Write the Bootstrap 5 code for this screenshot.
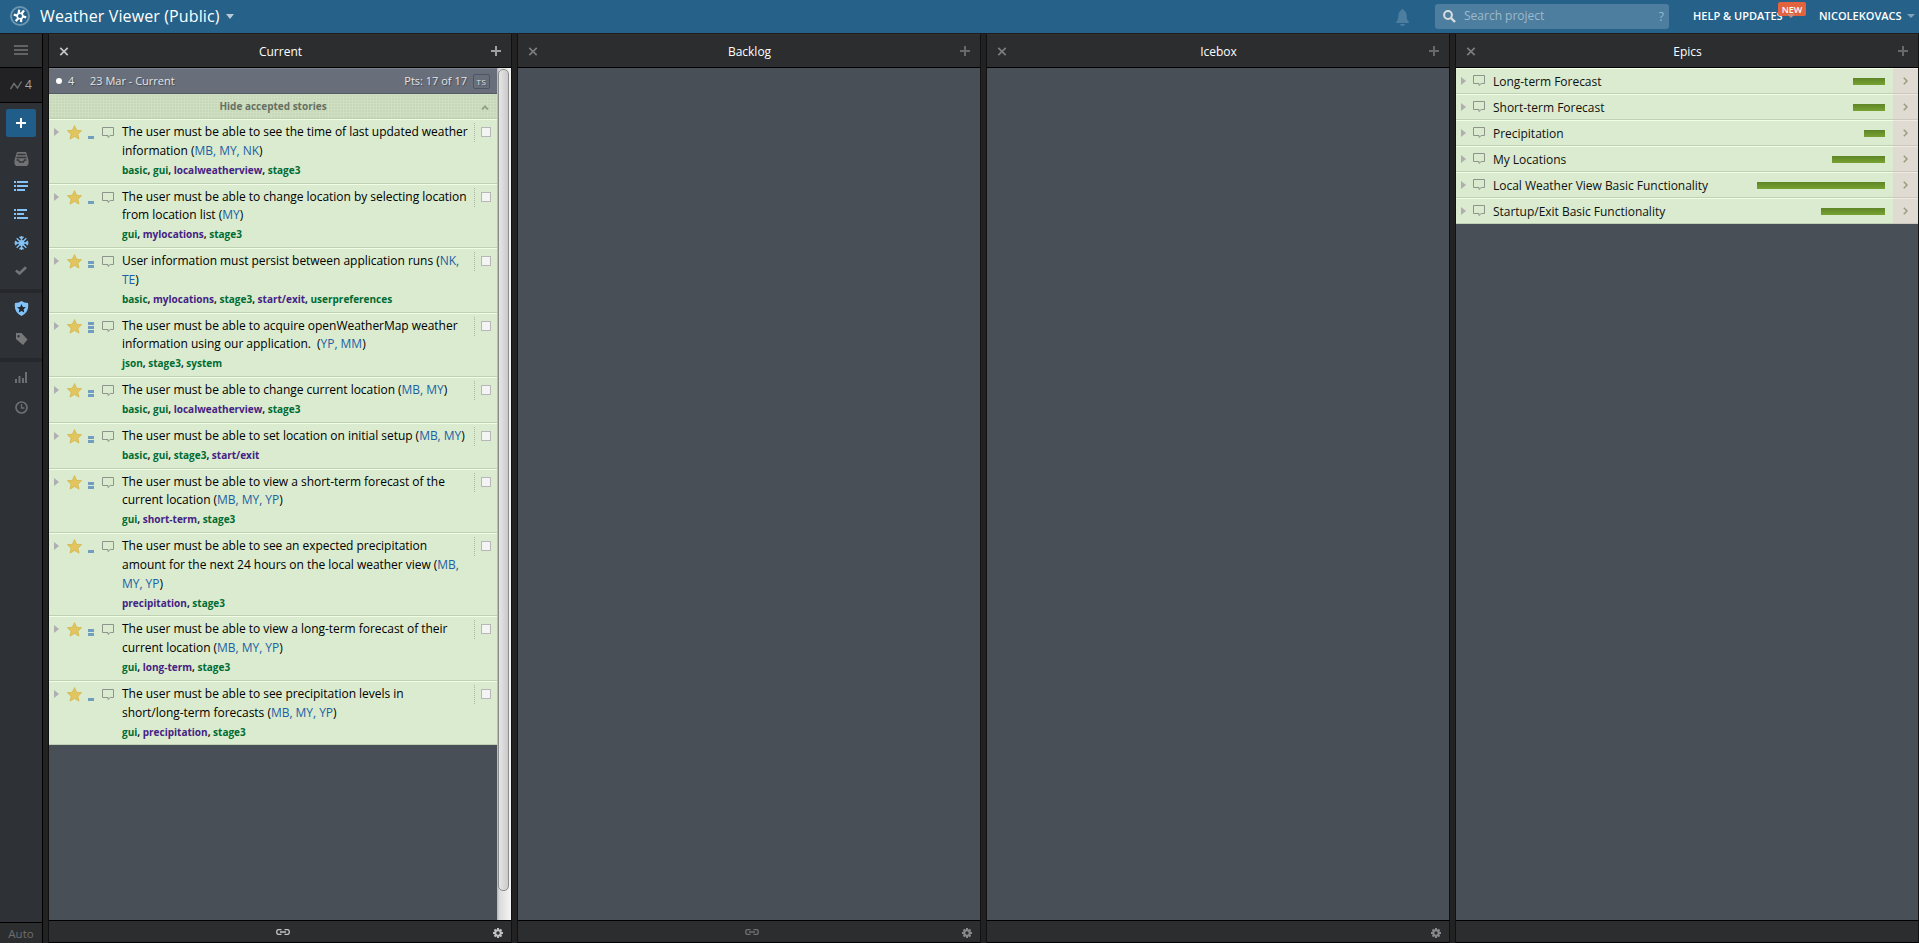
<!DOCTYPE html>
<html lang="en">
<head>
<meta charset="utf-8">
<title>Weather Viewer (Public)</title>
<link href="https://cdn.jsdelivr.net/npm/bootstrap@5.3.0/dist/css/bootstrap.min.css" rel="stylesheet">
<style>
body{font-family:"Open Sans","Noto Sans",sans-serif;font-size:12px;line-height:18.85px;height:943px;overflow:hidden;background:#222;color:#000}
svg{display:block;flex:none}
.topbar{height:33px;background:#256189;color:#fff}
.topbar .project{font-size:16px;letter-spacing:.12px;line-height:32px;margin-left:10px;width:181px;white-space:nowrap}
.searchbox{width:234px;height:25px;background:#4d7e9f;border-radius:3px;color:#9dbacb;font-size:12px}
.toplink{font-size:11px;font-weight:600;line-height:32px}
.newtag{position:absolute;left:85px;top:2px;width:28px;height:14px;background:#e4633f;border-radius:2px;font-size:9px;line-height:15px;font-weight:600;text-align:center}
.newtag::after{content:"";position:absolute;left:9px;top:12px;border:4px solid transparent;border-top-color:#c98a7c;border-bottom:0}
.main-area{height:910px;border-top:1px solid #1b1b1d}
.sidebar{width:43px;background:#2e3237;border-right:1px solid #000;margin-right:6px;color:#6f7173}
.side-top{height:34px;background:#2c2d2f;border-bottom:1px solid #000}
.side-vel{height:35px;background:#222224;border-bottom:1px solid #000;font-size:12px;color:#a5a6a7;gap:3px}
.addbtn{width:30px;height:28px;background:#205d89;border-radius:2px;margin-top:6px}
.side-line{height:4px;width:42px;background:#26282c}
.side-auto{height:21px;background:#2c2d2f;border-top:1px solid #000;font-size:11.5px;line-height:21px;color:#6c6d6e}
.panel{width:462px;margin-right:7px;background:#484f57;box-shadow:-1px 0 #111,1px 0 #111}
.panel-head{height:34px;background:#2c2d2f;border-bottom:1px solid #000;border-top:1px solid #35332f;color:#fff;font-size:12px;padding:0 10px 0 9px}
.panel-head span{padding-top:2px}
.panel-foot{height:23px;background:#2c2d2f;border-top:1px solid #000;border-bottom:1px solid #000;color:#6f7072}
.iter{height:26px;background:#686e7a;border-top:1px solid #7a808b;border-bottom:1px solid #535965;color:#e2e3e5;font-size:11px;text-shadow:1px 1px 1px #0005}
.iter .txt{padding-top:1px}
.tsbox{width:17px;height:15px;border:1px solid #4e5565;border-radius:2px;font-size:8px;letter-spacing:.7px;line-height:13px;text-align:center;margin:1px 7px 0 6px}
.hide-row{height:25px;background-color:#c6d8b7;background-image:linear-gradient(#cfdfc1 1px,transparent 1px),linear-gradient(90deg,#cfdfc1 1px,transparent 1px);background-size:3px 3px;border-bottom:1px solid #bccfaa;color:#667064;font-size:10px;font-weight:700}
.story,.epic{background:#daebcf;border-top:1px solid #f1fde5;border-bottom:1px solid #bfd1b3}
.story{padding:2px 0 3px 5px;white-space:nowrap}
.story i{font-style:normal;color:#1c5fa5}
.story-title{padding-top:1px;letter-spacing:-.03px}
.tags{font-size:10px;font-weight:700;line-height:18.85px;color:#006b33}
.tags b{color:#442284;font-weight:700}
.tags s{text-decoration:none;color:#222}
.est{width:6px;height:13px;margin:4px 8px 0 6px;gap:1px}
.est span{height:3px;background:#719dc1}
.tick{border-left:1px dotted #aab5a2;height:19px;width:23px;padding:4px 0 0 6px;margin-top:1px}
.tick span{display:block;width:10px;height:10px;background:#f4f4f4;border:1px solid #b7b7b7}
.scroller{width:14px;background:linear-gradient(90deg,#bbb 0 1px,#dadada 2px,#f5f5f5)}
.scroller div{width:11px;height:822px;margin:1px 0 0 1px;border:1px solid #8c8c8c;border-radius:5px;background:linear-gradient(90deg,#e6e6e6,#cacaca)}
.epic{height:26px;padding-left:5px;color:#111}
.ename{padding-top:3px;letter-spacing:-.02px}
.bar{height:7px;background:linear-gradient(#5d8427,#78a333);margin-right:8px}
.more{width:25px;height:26px;background:#dfdad2;border-top:1px solid #eee9e2;border-bottom:1px solid #cdc7bc}
</style>
</head>
<body>
<svg width="0" height="0" class="position-absolute"><defs>
<symbol id="tri" viewBox="0 0 5 8"><path d="M0 0L5 4L0 8z" fill="#b0aeb0"/></symbol>
<symbol id="star" viewBox="0 0 15 15"><path d="M7.5.6L9.6 5.3L14.6 5.7L10.9 9.2L12 14.1L7.5 11.5L3 14.1L4.1 9.2L.4 5.7L5.4 5.3z" fill="#e2c55e" stroke="#d3b240" stroke-width=".7"/></symbol>
<symbol id="talk" viewBox="0 0 13 12"><path d="M.5.5h11v8H8.3L6 10.500V8.500H.5z" fill="none" stroke="#8e938b"/></symbol>
<symbol id="plus" viewBox="0 0 10 10"><path d="M5 0v10M0 5h10" stroke="currentColor" stroke-width="2"/></symbol>
<symbol id="cross" viewBox="0 0 8 8"><path d="M.7.7l6.600 6.600M7.300.7L.7 7.300" stroke="currentColor" stroke-width="1.5"/></symbol>
<symbol id="chev" viewBox="0 0 5 8"><path d="M.8.8L4 4L.8 7.200" fill="none" stroke="#9c9a80" stroke-width="1.5"/></symbol>
<symbol id="chain" viewBox="0 0 14 6"><path d="M5.500.7H2.500Q.7.700.7 3T2.500 5.300H5.500M8.500.7h3q1.800 0 1.800 2.300t-1.800 2.300h-3M4 3h6" fill="none" stroke="currentColor" stroke-width="1.3"/></symbol>
<symbol id="gear" viewBox="0 0 10 10"><path d="M5 0v10M0 5h10M1.500 1.500l7 7M8.500 1.500l-7 7" stroke="currentColor" stroke-width="2"/><circle cx="5" cy="5" r="2.700" fill="#2c2d2f" stroke="currentColor" stroke-width="2"/></symbol>
</defs></svg>

<div class="topbar d-flex">
  <svg width="20" height="20" viewBox="0 0 20 20" style="margin:6px 0 0 10px"><circle cx="10" cy="10" r="9" fill="#256189" stroke="#6c95b0" stroke-width="2"/><g stroke="#fff" stroke-width="2.300"><path d="M8.600 7.800L9.200 3.700M11.500 7.700L14 4.400M12.700 10.300L16.200 11.300M11.300 12.400L11 16.200M8.400 12.300L5.700 15.100M7.300 9.700L3.800 8.700"/></g><circle cx="10" cy="10" r="2.800" fill="none" stroke="#fff" stroke-width="1.600"/></svg>
  <div class="project">Weather Viewer (Public)</div>
  <svg width="8" height="5" style="margin:14px 0 0 5px"><path d="M0 0h8L4 5z" fill="#b5cbd9"/></svg>
  <svg class="ms-auto" width="13" height="17" viewBox="0 0 13 17" style="margin:9px 26px 0 0"><path d="M6.500 0Q8 0 8 1.600Q10.500 2.600 10.700 8Q10.800 11 12.800 13v1H.2v-1Q2.200 11 2.300 8Q2.500 2.600 5 1.600Q5 0 6.500 0M4 15h5q-.5 2-2.500 2T4 15" fill="#4d7e9f"/></svg>
  <div class="searchbox d-flex align-items-center" style="margin:4px 24px 0 0">
    <svg width="13" height="13" viewBox="0 0 13 13" style="margin:0 8px 0 8px"><circle cx="5" cy="5" r="3.900" fill="none" stroke="#d9dde0" stroke-width="2"/><path d="M8 8l4 4" stroke="#d9dde0" stroke-width="2.400"/></svg>
    <span>Search project</span><span style="margin:2px 5px 0 auto">?</span>
  </div>
  <div class="toplink position-relative" style="width:126px"><span>HELP &amp; UPDATES</span><span class="newtag">NEW</span></div>
  <div class="toplink" style="width:88px">NICOLEKOVACS</div>
  <svg width="8" height="4" style="margin:14px 4px 0 0"><path d="M0 0h8L4 4z" fill="#7ea3bb"/></svg>
</div>

<div class="main-area d-flex">
  <div class="sidebar d-flex flex-column align-items-center">
    <div class="side-top w-100 d-flex justify-content-center"><svg width="14" height="10" style="margin-top:11px"><path d="M0 1h14M0 5h14M0 9h14" stroke="#626365" stroke-width="2"/></svg></div>
    <div class="side-vel w-100 d-flex align-items-center justify-content-center"><svg width="12" height="9" viewBox="0 0 12 9"><path d="M.5 8L4 2.500L7.500 7L11.500.5" fill="none" stroke="#6f7072" stroke-width="1.400"/></svg>4</div>
    <div class="addbtn d-flex align-items-center justify-content-center text-white"><svg width="10" height="10"><use href="#plus"/></svg></div>
    <svg width="15" height="14" viewBox="0 0 15 14" style="margin-top:15px"><path d="M3 0h9l2.500 8v4l-1.500 2H2L.5 12V8z" fill="#717274"/><path d="M3.500 2.500h8M2.500 5.500h10M2.500 8h2l1 2h4l1-2h2" fill="none" stroke="#34373a" stroke-width="1.300"/></svg>
    <svg width="14" height="10" style="margin-top:15px;color:#83c3fa"><path d="M0 1h2M3 1h11M0 5h2M3 5h11M0 9h2M3 9h8" stroke="currentColor" stroke-width="2"/></svg>
    <svg width="14" height="10" style="margin-top:18px;color:#83c3fa"><path d="M0 1h2M3 1h10M0 5h2M3 5h7M0 9h2M3 9h11" stroke="currentColor" stroke-width="2"/></svg>
    <svg width="15" height="14" viewBox="0 0 15 14" style="margin-top:17px"><path d="M7.500 0v14M.5 7h14M2.700 2.200l9.600 9.600M12.300 2.200l-9.600 9.600M5.500.8l2 2 2-2M5.500 13.200l2-2 2 2M1.200 5l2 2-2 2M13.800 5l-2 2 2 2" fill="none" stroke="#83c3fa" stroke-width="1.300"/><circle cx="7.500" cy="7" r="2.300" fill="none" stroke="#83c3fa" stroke-width="1.200"/></svg>
    <svg width="12" height="9" viewBox="0 0 12 9" style="margin-top:16px"><path d="M1 4.500L4.500 7.500L11 1.200" fill="none" stroke="#747577" stroke-width="2.600"/></svg>
    <div class="side-line" style="margin-top:14px"></div>
    <svg width="15" height="15" viewBox="0 0 15 15" style="margin-top:8px"><path d="M7.500 0Q10 2 14 2Q15.500 11 7.500 15Q-.5 11 1 2Q5 2 7.500 0" fill="#83c3fa"/><path d="M7.500 3L8.800 5.900L12 6.200L9.600 8.300L10.300 11.500L7.500 9.900L4.700 11.500L5.400 8.300L3 6.200L6.200 5.900z" fill="#23282e"/></svg>
    <svg width="13" height="12" viewBox="0 0 13 12" style="margin-top:17px"><path fill-rule="evenodd" d="M1 0h5.500L12.500 6.500L8 12L1 6zM3.500 2a1.200 1.200 0 1 0 .1 0" fill="#77787a"/></svg>
    <div class="side-line" style="margin-top:13px"></div>
    <svg width="12" height="12" style="margin-top:9px"><path d="M1 12V8M4.500 12V5M8 12V7M11 12V1" stroke="#6d6e71" stroke-width="2"/></svg>
    <svg width="13" height="13" viewBox="0 0 13 13" style="margin-top:18px"><circle cx="6.500" cy="6.500" r="5.500" fill="none" stroke="#6d6e71" stroke-width="1.700"/><path d="M6.500 3v4h3" fill="none" stroke="#6d6e71" stroke-width="1.300"/></svg>
    <div class="side-auto w-100 text-center mt-auto">Auto</div>
  </div>

  <div class="panel d-flex flex-column">
    <div class="panel-head d-flex align-items-center justify-content-between"><svg width="12" height="9" style="color:#c4c4c4"><use href="#cross"/></svg><span>Current</span><svg width="10" height="10" style="color:#a0a0a0"><use href="#plus"/></svg></div>
    <div class="flex-grow-1 d-flex">
      <div class="flex-grow-1">
        <div class="iter d-flex align-items-center"><span class="rounded-circle bg-white" style="width:6px;height:6px;margin-left:7px"></span><span class="txt" style="margin-left:6px;width:22px">4</span><span class="txt">23 Mar - Current</span><span class="ms-auto txt">Pts: 17 of 17</span><span class="tsbox">TS</span></div>
        <div class="hide-row d-flex align-items-center"><span class="flex-grow-1 text-center">Hide accepted stories</span><svg width="8" height="5" style="margin:2px 8px 0 -16px"><path d="M1 4.500L4 1.500L7 4.500" fill="none" stroke="#92a584" stroke-width="2"/></svg></div>
        <div id="stories"></div>
      </div>
      <div class="scroller"><div></div></div>
    </div>
    <div class="panel-foot d-flex align-items-center" style="color:#c2c2c2"><svg width="14" height="6" style="margin-left:227px"><use href="#chain"/></svg><svg class="ms-auto" width="10" height="10" style="margin-right:8px;margin-top:3px"><use href="#gear"/></svg></div>
  </div>

  <div class="panel d-flex flex-column">
    <div class="panel-head d-flex align-items-center justify-content-between"><svg width="12" height="9" style="color:#7c7c7e"><use href="#cross"/></svg><span>Backlog</span><svg width="10" height="10" style="color:#69696b"><use href="#plus"/></svg></div>
    <div class="flex-grow-1"></div>
    <div class="panel-foot d-flex align-items-center"><svg width="14" height="6" style="margin-left:227px"><use href="#chain"/></svg><svg class="ms-auto" width="10" height="10" style="margin-right:8px;margin-top:3px;color:#8a8a8c"><use href="#gear"/></svg></div>
  </div>

  <div class="panel d-flex flex-column">
    <div class="panel-head d-flex align-items-center justify-content-between"><svg width="12" height="9" style="color:#7c7c7e"><use href="#cross"/></svg><span>Icebox</span><svg width="10" height="10" style="color:#69696b"><use href="#plus"/></svg></div>
    <div class="flex-grow-1"></div>
    <div class="panel-foot d-flex align-items-center"><svg class="ms-auto" width="10" height="10" style="margin-right:8px;margin-top:3px;color:#8a8a8c"><use href="#gear"/></svg></div>
  </div>

  <div class="panel d-flex flex-column me-0">
    <div class="panel-head d-flex align-items-center justify-content-between"><svg width="12" height="9" style="color:#7c7c7e"><use href="#cross"/></svg><span>Epics</span><svg width="10" height="10" style="color:#69696b"><use href="#plus"/></svg></div>
    <div class="flex-grow-1" id="epics"></div>
    <div class="panel-foot"></div>
  </div>
</div>

<script>
// Each story: title lines, estimate, labels (a leading * marks an epic label).
const stories = [
  ["The user must be able to see the time of last updated weather<br>information (<i>MB, MY, NK</i>)", 1, "basic,gui,*localweatherview,stage3"],
  ["The user must be able to change location by selecting location<br>from location list (<i>MY</i>)", 1, "gui,*mylocations,stage3"],
  ["User information must persist between application runs (<i>NK,<br>TE</i>)", 2, "basic,*mylocations,stage3,*start/exit,userpreferences"],
  ["The user must be able to acquire openWeatherMap weather<br>information using our application.&nbsp; (<i>YP, MM</i>)", 3, "json,stage3,system"],
  ["The user must be able to change current location (<i>MB, MY</i>)", 2, "basic,gui,*localweatherview,stage3"],
  ["The user must be able to set location on initial setup (<i>MB, MY</i>)", 2, "basic,gui,stage3,*start/exit"],
  ["The user must be able to view a short-term forecast of the<br>current location (<i>MB, MY, YP</i>)", 2, "gui,*short-term,stage3"],
  ["The user must be able to see an expected precipitation<br>amount for the next 24 hours on the local weather view (<i>MB,<br>MY, YP</i>)", 1, "*precipitation,stage3"],
  ["The user must be able to view a long-term forecast of their<br>current location (<i>MB, MY, YP</i>)", 2, "gui,*long-term,stage3"],
  ["The user must be able to see precipitation levels in<br>short/long-term forecasts (<i>MB, MY, YP</i>)", 1, "gui,*precipitation,stage3"]
];
document.getElementById("stories").innerHTML = stories.map(([title, pts, tags]) => `
<div class="story d-flex align-items-start">
  <svg width="5" height="8" style="margin:6px 8px 0 0"><use href="#tri"/></svg>
  <svg width="15" height="15" style="margin-top:3px"><use href="#star"/></svg>
  <div class="est d-flex flex-column justify-content-end">${"<span></span>".repeat(pts)}</div>
  <svg width="13" height="12" style="margin:5px 7px 0 0"><use href="#talk"/></svg>
  <div class="flex-grow-1"><div class="story-title">${title}</div><div class="tags">${tags.split(",").map(t => t[0] === "*" ? `<b>${t.slice(1)}</b>` : t).join("<s>, </s>")}</div></div>
  <div class="tick"><span></span></div>
</div>`).join("");
const epics = [["Long-term Forecast", 32], ["Short-term Forecast", 32], ["Precipitation", 21], ["My Locations", 53], ["Local Weather View Basic Functionality", 128], ["Startup/Exit Basic Functionality", 64]];
document.getElementById("epics").innerHTML = epics.map(([name, w]) => `
<div class="epic d-flex align-items-center">
  <svg width="5" height="8" style="margin-right:7px"><use href="#tri"/></svg>
  <svg width="13" height="12" style="margin-right:7px"><use href="#talk"/></svg>
  <span class="ename">${name}</span>
  <div class="bar ms-auto" style="width:${w}px"></div>
  <div class="more d-flex align-items-center justify-content-center"><svg width="5" height="8"><use href="#chev"/></svg></div>
</div>`).join("");
</script>
<script src="https://cdn.jsdelivr.net/npm/bootstrap@5.3.0/dist/js/bootstrap.bundle.min.js"></script>
</body>
</html>
